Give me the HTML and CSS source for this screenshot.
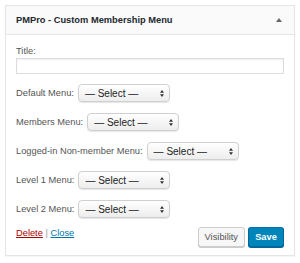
FILE: index.html
```html
<!DOCTYPE html>
<html lang="en">
<head>
    <meta charset="UTF-8">
    <title>PMPro - Custom Membership Menu</title>
    <link rel="stylesheet" href="styles.css">
</head>
<body>
    <div class="widget">
        <div class="widget-top">
            <h3>PMPro - Custom Membership Menu</h3>
            <svg class="toggle" width="6" height="4" viewBox="0 0 6 4"><path d="M3 0 L6 4 L0 4 Z" fill="#666"/></svg>
        </div>

        <div class="widget-inside">
            <label class="title-label">Title:</label>
            <div class="text-input"></div>

            <div class="row">
                <span class="label">Default Menu:</span>
                <div class="select"><span>&mdash; Select &mdash;</span><svg width="4" height="7" viewBox="0 0 4 7"><path d="M2 0 L4 2.8 L0 2.8 Z M2 7 L4 4.2 L0 4.2 Z" fill="#333"/></svg></div>
            </div>
            <div class="row">
                <span class="label">Members Menu:</span>
                <div class="select"><span>&mdash; Select &mdash;</span><svg width="4" height="7" viewBox="0 0 4 7"><path d="M2 0 L4 2.8 L0 2.8 Z M2 7 L4 4.2 L0 4.2 Z" fill="#333"/></svg></div>
            </div>
            <div class="row">
                <span class="label">Logged-in Non-member Menu:</span>
                <div class="select"><span>&mdash; Select &mdash;</span><svg width="4" height="7" viewBox="0 0 4 7"><path d="M2 0 L4 2.8 L0 2.8 Z M2 7 L4 4.2 L0 4.2 Z" fill="#333"/></svg></div>
            </div>
            <div class="row">
                <span class="label">Level 1 Menu:</span>
                <div class="select"><span>&mdash; Select &mdash;</span><svg width="4" height="7" viewBox="0 0 4 7"><path d="M2 0 L4 2.8 L0 2.8 Z M2 7 L4 4.2 L0 4.2 Z" fill="#333"/></svg></div>
            </div>
            <div class="row">
                <span class="label">Level 2 Menu:</span>
                <div class="select"><span>&mdash; Select &mdash;</span><svg width="4" height="7" viewBox="0 0 4 7"><path d="M2 0 L4 2.8 L0 2.8 Z M2 7 L4 4.2 L0 4.2 Z" fill="#333"/></svg></div>
            </div>

            <div class="widget-control">
                <div class="links">
                    <a href="#" class="delete">Delete</a> | <a href="#" class="close">Close</a>
                </div>
                <div class="buttons">
                    <button class="btn">Visibility</button>
                    <button class="btn primary">Save</button>
                </div>
            </div>
        </div>
    </div>
</body>
</html>
```

FILE: styles.css
```css
body {
    margin: 0;
    padding: 5px;
    background-color: #fff;
    font-family: "Liberation Sans", Arial, sans-serif;
    font-size: 9.3px;
    color: #444;
}

.widget {
    width: 288px;
    border: 1px solid #e5e5e5;
    box-shadow: 0 1px 1px rgba(0, 0, 0, 0.04);
    background-color: #fff;
}

.widget-top {
    height: 28px;
    display: flex;
    align-items: center;
    justify-content: space-between;
    padding: 0 12px 0 10px;
    background-color: #fafafa;
    border-bottom: 1px solid #e5e5e5;
}

.widget-top h3 {
    margin: 0;
    font-size: 9.3px;
    font-weight: bold;
    color: #23282d;
}

.widget-inside {
    padding: 10px 10px 8px;
}

.title-label {
    display: block;
    line-height: 12px;
    color: #555;
}

.text-input {
    height: 14px;
    margin-top: 1px;
    border: 1px solid #ddd;
    box-shadow: inset 0 1px 2px rgba(0, 0, 0, 0.07);
}

.row {
    display: flex;
    align-items: center;
    margin-top: 11px;
}

.text-input + .row {
    margin-top: 10px;
}

.label {
    color: #555;
    margin-right: 4px;
}

.select {
    display: flex;
    align-items: center;
    justify-content: space-between;
    padding: 0 5px 0 6px;
    box-sizing: border-box;
    width: 92px;
    height: 18px;
    border: 1px solid #cfcfcf;
    border-radius: 4px;
    background: linear-gradient(#fff, #ededed);
    box-shadow: 0 1px 1px rgba(0, 0, 0, 0.1);
    font-size: 10px;
    color: #222;
}

.widget-control {
    display: flex;
    justify-content: space-between;
    align-items: flex-start;
    margin-top: 9px;
}

.links {
    color: #999;
    line-height: 12px;
}

.links a {
    text-decoration: underline;
}

.delete {
    color: #a00;
}

.close {
    color: #0073aa;
}

.buttons {
    display: flex;
    gap: 3px;
}

.btn {
    height: 20px;
    padding: 0 6px;
    font-family: "Liberation Sans", Arial, sans-serif;
    font-size: 9.3px;
    color: #555;
    background-color: #f7f7f7;
    border: 1px solid #ccc;
    border-radius: 3px;
    box-shadow: 0 1px 0 #ccc;
}

.btn.primary {
    width: 36px;
    padding: 0;
    color: #fff;
    font-weight: bold;
    background-color: #0085ba;
    border-color: #0073aa #006799 #006799;
    box-shadow: 0 1px 0 #006799;
}
```
